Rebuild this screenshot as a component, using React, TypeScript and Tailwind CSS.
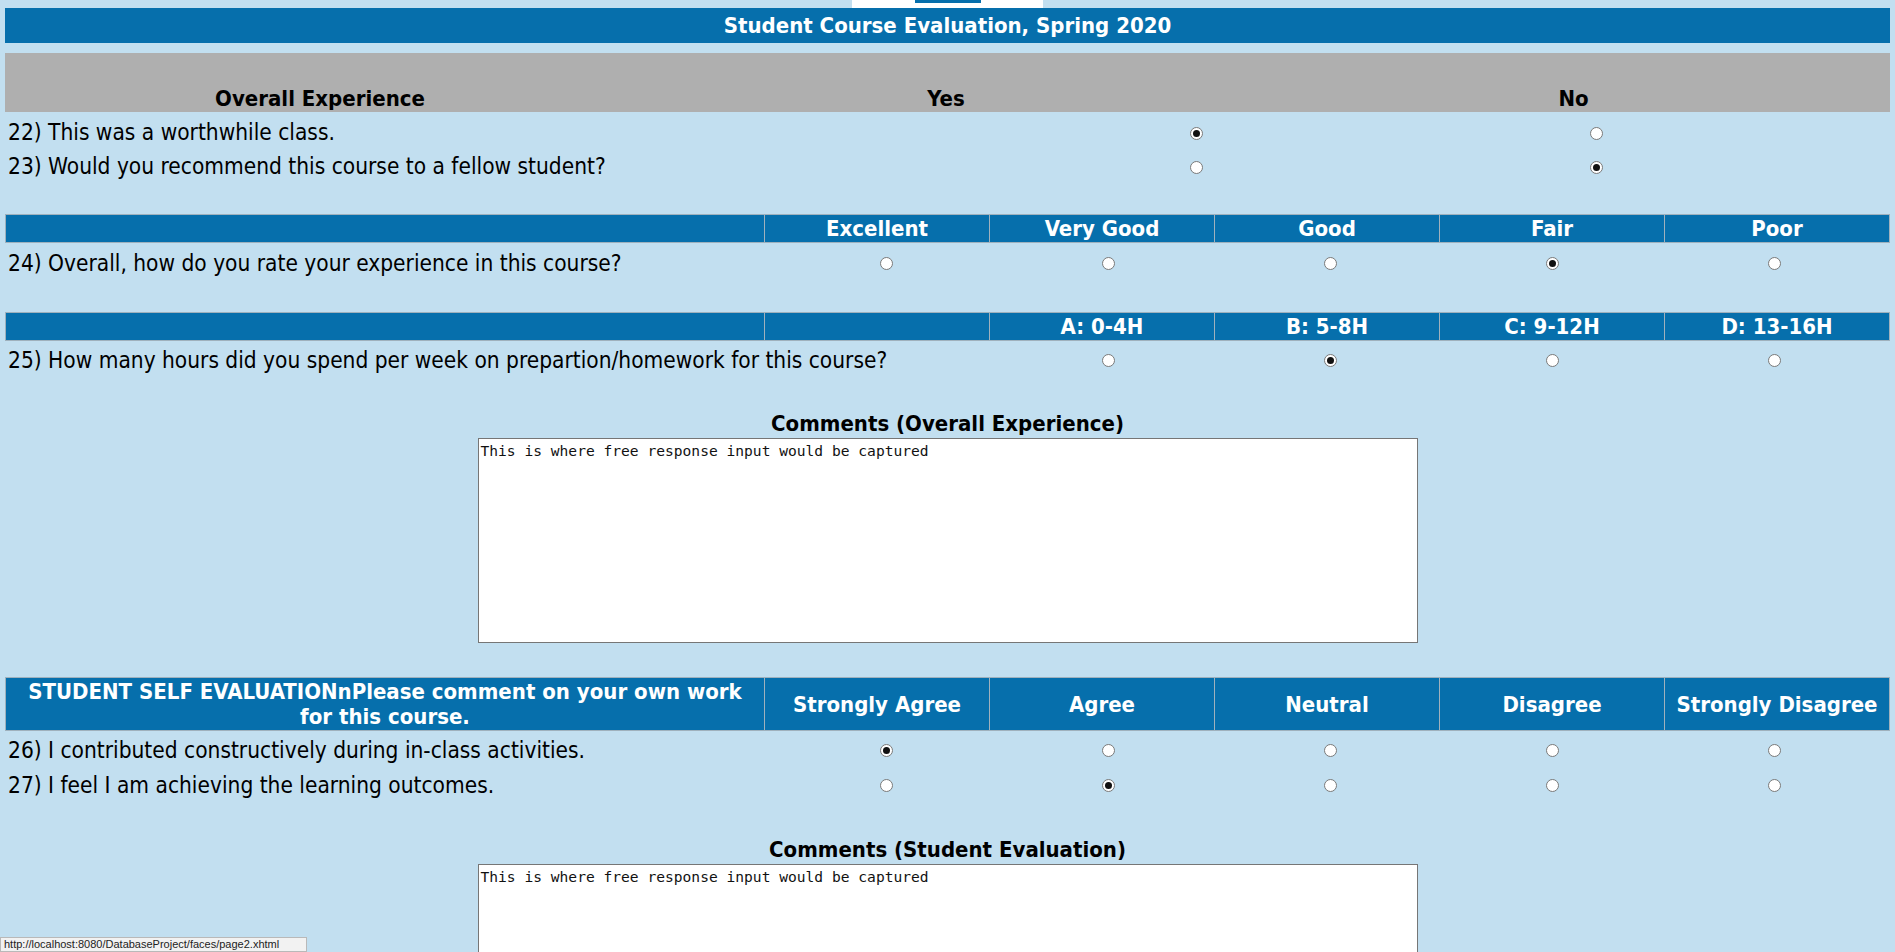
import React from 'react';

const BLUE = 'bg-[#066fac]';

function Radio({ checked }: { checked?: boolean }) {
  return (
    <span className="flex h-[13px] w-[13px] items-center justify-center rounded-full border border-[#7a7a7a] bg-white">
      {checked && <span className="h-[7px] w-[7px] rounded-full bg-[#111]" />}
    </span>
  );
}

function HeaderBar({ cells, tall }: { cells: string[]; tall?: boolean }) {
  return (
    <div
      className={`mx-[5px] grid grid-cols-[758px_225px_225px_225px_225px_1fr] border border-[#9fb1bd] ${BLUE} text-[22px] font-bold text-white`}
    >
      {cells.map((c, i) => (
        <div
          key={i}
          className={`flex items-center justify-center px-[6px] text-center ${i > 0 ? 'border-l border-[#9fb1bd]' : ''} ${
            tall ? 'h-[52px] leading-[25px]' : 'h-[27px] pt-[1px] leading-[26px]'
          }`}
        >
          {c}
        </div>
      ))}
    </div>
  );
}

function RatingRow({
  label,
  picks,
  offset = 0,
  tall,
}: {
  label: string;
  picks: number;
  offset?: number;
  tall?: boolean;
}) {
  const count = 5 - offset;
  return (
    <div
      className={`mx-[5px] grid grid-cols-[770px_repeat(5,222px)] items-center text-[22.5px] ${
        tall ? 'h-[35px]' : 'h-[34px]'
      }`}
    >
      <div className="whitespace-nowrap pl-[3px] pt-[2px]">{label}</div>
      {offset > 0 && <div />}
      {Array.from({ length: count }).map((_, i) => (
        <div key={i} className="flex justify-center pt-[1px]">
          <Radio checked={i === picks} />
        </div>
      ))}
    </div>
  );
}

function YesNoRow({ label, yes }: { label: string; yes: boolean }) {
  return (
    <div className="mx-[5px] grid h-[34px] grid-cols-[1177px_28px_372px_28px] items-center text-[22.5px]">
      <div className="pl-[3px]">{label}</div>
      <div className="flex justify-center">
        <Radio checked={yes} />
      </div>
      <div />
      <div className="flex justify-center">
        <Radio checked={!yes} />
      </div>
    </div>
  );
}

function Comments({ title }: { title: string }) {
  return (
    <div className="flex flex-col items-center">
      <div className="h-[26px] pt-[1px] text-[22px] font-bold leading-[26px]">{title}</div>
      <textarea
        readOnly
        defaultValue="This is where free response input would be captured"
        className="mt-[2px] h-[205px] w-[940px] resize-none border border-[#767676] bg-white px-[2px] py-[3px] text-[14.6px] leading-[17px] text-[#111] outline-none [font-stretch:normal]"
        style={{ fontFamily: '"DejaVu Sans Mono", "Liberation Mono", monospace' }}
      />
    </div>
  );
}

export default function App() {
  return (
    <div
      className="relative h-[952px] overflow-hidden bg-[#c2dff0] text-black [font-stretch:condensed]"
      style={{ fontFamily: '"DejaVu Sans Condensed", "DejaVu Sans", Tahoma, sans-serif' }}
    >
      <div className="flex h-[8px] justify-center">
        <div className="flex w-[191px] justify-center bg-white">
          <div className="h-[3px] w-[66px] bg-[#066fac]" />
        </div>
      </div>

      <div className={`mx-[5px] flex h-[35px] items-center justify-center ${BLUE} text-[22px] font-bold text-white`}>
        Student Course Evaluation, Spring 2020
      </div>

      <div className="mx-[5px] mt-[10px] grid h-[59px] grid-cols-[630px_622px_1fr] items-end bg-[#afafaf] text-[22px] font-bold leading-[26px]">
        <div className="text-center">Overall Experience</div>
        <div className="text-center">Yes</div>
        <div className="text-center">No</div>
      </div>
      <div className="pt-[4px]">
        <YesNoRow label="22) This was a worthwhile class." yes />
        <YesNoRow label="23) Would you recommend this course to a fellow student?" yes={false} />
      </div>

      <div className="mt-[30px]">
        <HeaderBar cells={['', 'Excellent', 'Very Good', 'Good', 'Fair', 'Poor']} />
        <div className="pt-[2px]">
          <RatingRow label="24) Overall, how do you rate your experience in this course?" picks={3} />
        </div>
      </div>

      <div className="mt-[33px]">
        <HeaderBar cells={['', '', 'A: 0-4H', 'B: 5-8H', 'C: 9-12H', 'D: 13-16H']} />
        <div className="pt-[1px]">
          <RatingRow
            label="25) How many hours did you spend per week on prepartion/homework for this course?"
            picks={1}
            offset={1}
          />
        </div>
      </div>

      <div className="mt-[34px]">
        <Comments title="Comments (Overall Experience)" />
      </div>

      <div className="mt-[34px]">
        <HeaderBar
          tall
          cells={[
            'STUDENT SELF EVALUATIONnPlease comment on your own work for this course.',
            'Strongly Agree',
            'Agree',
            'Neutral',
            'Disagree',
            'Strongly Disagree',
          ]}
        />
        <div className="pt-[1px]">
          <RatingRow tall label="26) I contributed constructively during in-class activities." picks={0} />
          <RatingRow tall label="27) I feel I am achieving the learning outcomes." picks={1} />
        </div>
      </div>

      <div className="mt-[34px]">
        <Comments title="Comments (Student Evaluation)" />
      </div>

      <div
        className="absolute bottom-0 left-0 flex h-[15px] w-[307px] items-center border border-[#b9b9b9] bg-[#f2f2f2] px-[3px] text-[11px] text-[#222] [font-stretch:normal]"
        style={{ fontFamily: '"Liberation Sans", Arial, sans-serif' }}
      >
        http://localhost:8080/DatabaseProject/faces/page2.xhtml
      </div>
    </div>
  );
}
